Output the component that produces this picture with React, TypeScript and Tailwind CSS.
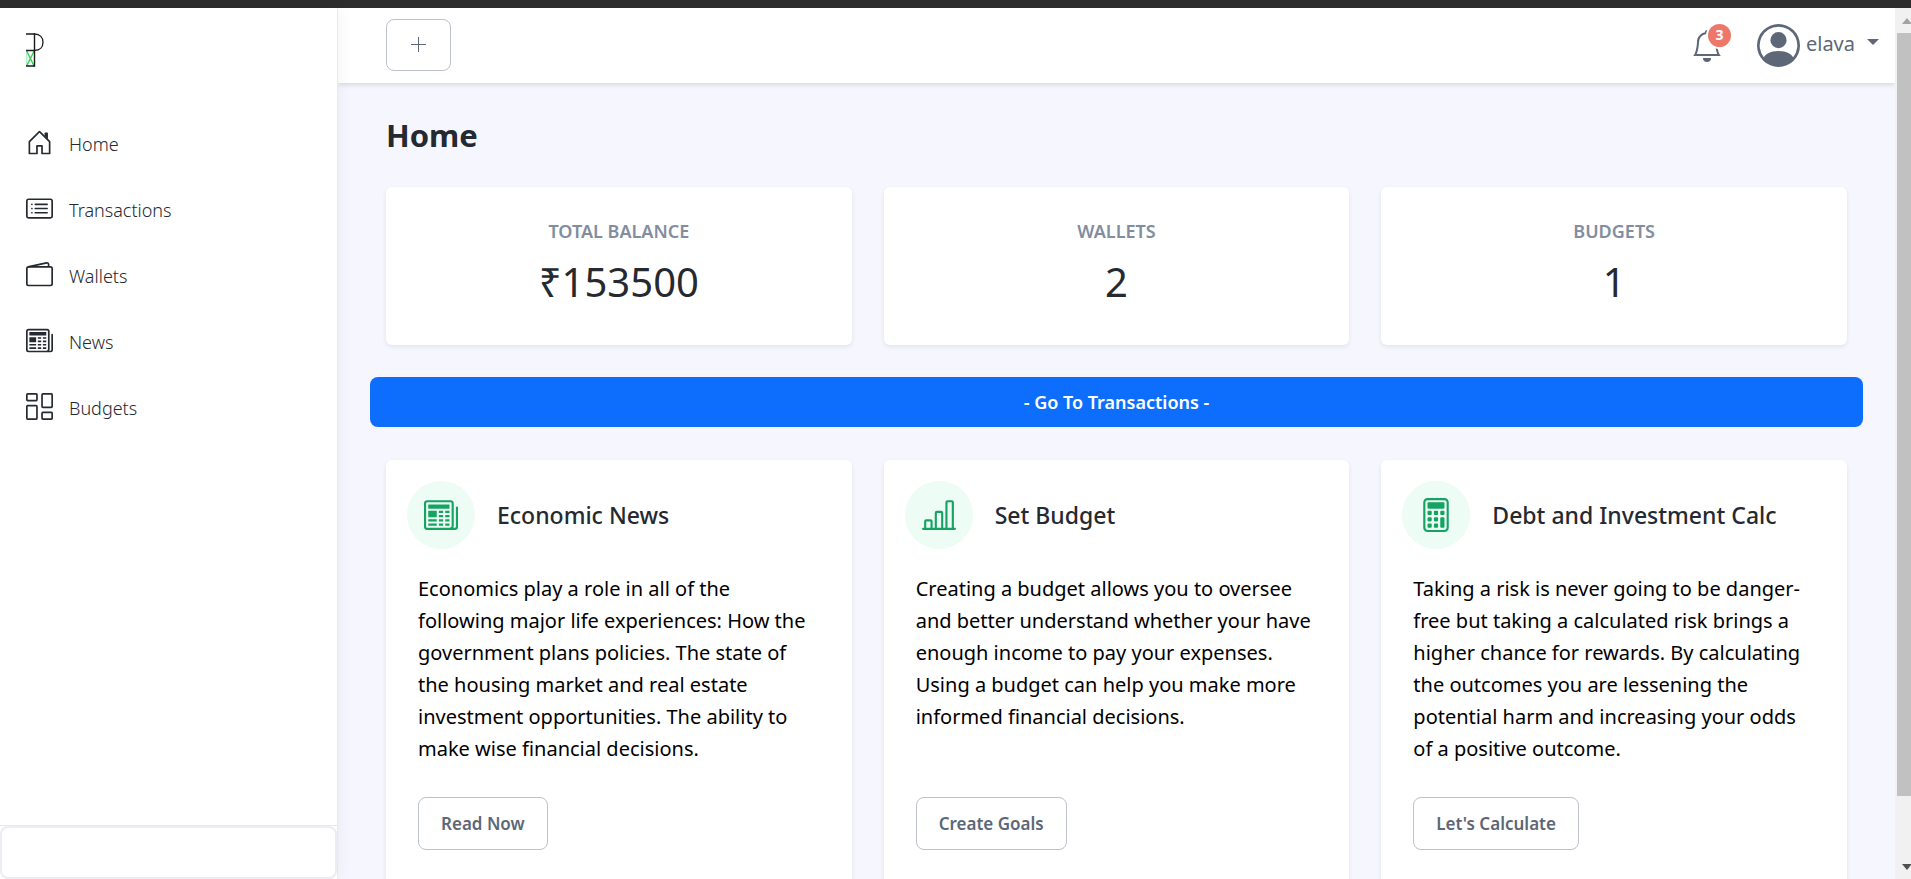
import type { ReactNode } from "react";
import {
  BsBarChartLine,
  BsCalculator,
  BsCardList,
  BsColumnsGap,
  BsNewspaper,
  BsPersonCircle,
} from "react-icons/bs";

function Logo() {
  return (
    <svg width="18" height="34" viewBox="0 0 18 34" fill="none" aria-hidden="true">
      <path d="M0.8 18.3 8 32.8M8 18.3 0.8 32.8" stroke="#2fd158" strokeWidth="1.4" />
      <path d="M0.8 18V33" stroke="#2fd158" strokeWidth="0.5" />
      <path d="M0 1H9M0 17.5H9M0 33H9" stroke="#1b1b1b" strokeWidth="1.4" />
      <path d="M8.5 0.5V33.6" stroke="#1b1b1b" strokeWidth="1.4" />
      <path d="M8.5 1C14 1 17 4.6 17 9.2S14 17.4 8.5 17.4" stroke="#1b1b1b" strokeWidth="1.3" />
    </svg>
  );
}

function HouseIcon() {
  return (
    <svg width="27" height="27" viewBox="0 0 16 16" fill="currentColor" aria-hidden="true">
      <path
        fillRule="evenodd"
        d="M7.646 1.146a.5.5 0 0 1 .708 0l6 6a.5.5 0 0 1 .146.354v7a.5.5 0 0 1-.5.5H9.5a.5.5 0 0 1-.5-.5v-4H7v4a.5.5 0 0 1-.5.5H2a.5.5 0 0 1-.5-.5v-7a.5.5 0 0 1 .146-.354l6-6zM2.5 7.707V14H6v-4a.5.5 0 0 1 .5-.5h3a.5.5 0 0 1 .5.5v4h3.5V7.707L8 2.207l-5.5 5.5z"
      />
      <path fillRule="evenodd" d="M13 2.5V6l-2-2V2.5a.5.5 0 0 1 .5-.5h1a.5.5 0 0 1 .5.5z" />
    </svg>
  );
}

function WalletIcon() {
  return (
    <svg width="27" height="27" viewBox="0 0 16 16" fill="none" stroke="currentColor" strokeLinejoin="round" aria-hidden="true">
      <rect x="0.5" y="3.5" width="15" height="11" rx="1" />
      <path d="M1.2 3.5 12.2 1.1a1 1 0 0 1 1.2 1V3.5" />
    </svg>
  );
}

function BellIcon() {
  return (
    <svg width="32" height="32" viewBox="0 0 16 16" fill="currentColor" aria-hidden="true">
      <path d="M8 16a2 2 0 0 0 2-2H6a2 2 0 0 0 2 2z" />
      <path
        fillRule="evenodd"
        d="M8 1.918l-.797.161A4.002 4.002 0 0 0 4 6c0 .628-.134 2.197-.459 3.742-.16.767-.376 1.566-.663 2.258h10.244c-.287-.692-.502-1.49-.663-2.258C12.134 8.197 12 6.628 12 6a4.002 4.002 0 0 0-3.203-3.92L8 1.917zM14.22 12c.223.447.481.801.78 1H1c.299-.199.557-.553.78-1C2.68 10.2 3 6.88 3 6c0-2.42 1.72-4.44 4.005-4.901a1 1 0 1 1 1.99 0A5.002 5.002 0 0 1 13 6c0 .88.32 4.2 1.22 6z"
      />
    </svg>
  );
}

const navItems: { label: string; icon: ReactNode }[] = [
  { label: "Home", icon: <HouseIcon /> },
  { label: "Transactions", icon: <BsCardList size={27} /> },
  { label: "Wallets", icon: <WalletIcon /> },
  { label: "News", icon: <BsNewspaper size={27} /> },
  { label: "Budgets", icon: <BsColumnsGap size={27} /> },
];

const stats = [
  { label: "TOTAL BALANCE", value: "₹153500" },
  { label: "WALLETS", value: "2" },
  { label: "BUDGETS", value: "1" },
];

const features: { title: string; text: string; action: string; icon: ReactNode }[] = [
  {
    title: "Economic News",
    text: "Economics play a role in all of the following major life experiences: How the government plans policies. The state of the housing market and real estate investment opportunities. The ability to make wise financial decisions.",
    action: "Read Now",
    icon: <BsNewspaper size={34} />,
  },
  {
    title: "Set Budget",
    text: "Creating a budget allows you to oversee and better understand whether your have enough income to pay your expenses. Using a budget can help you make more informed financial decisions.",
    action: "Create Goals",
    icon: <BsBarChartLine size={34} />,
  },
  {
    title: "Debt and Investment Calc",
    text: "Taking a risk is never going to be danger-free but taking a calculated risk brings a higher chance for rewards. By calculating the outcomes you are lessening the potential harm and increasing your odds of a positive outcome.",
    action: "Let's Calculate",
    icon: <BsCalculator size={34} />,
  },
];

function Sidebar() {
  return (
    <aside className="z-20 flex w-[338px] shrink-0 flex-col border-r border-[#e7e9ed] bg-white shadow-[0_0_16px_rgba(0,0,0,0.06)]">
      <a href="#home" aria-label="Portal" className="ml-[26px] mt-[25px]">
        <Logo />
      </a>
      <nav className="mt-[42px] flex flex-1 flex-col">
        {navItems.map((item) => (
          <a
            key={item.label}
            href={"#" + item.label.toLowerCase()}
            className="flex h-[66px] items-center gap-4 pl-[26px] text-lg font-light text-[#252930]"
          >
            {item.icon}
            <span className="pt-1">{item.label}</span>
          </a>
        ))}
      </nav>
      <div className="border-t border-[#e7e9ed]">
        <div className="h-[53px] rounded-lg border-2 border-[#ececf2]" />
      </div>
    </aside>
  );
}

function Header() {
  return (
    <header className="z-10 flex h-[75px] shrink-0 items-center justify-between bg-white pl-12 pr-4 shadow-[0_2px_5px_rgba(0,0,0,0.12)]">
      <button
        type="button"
        aria-label="Add"
        className="mb-0.5 flex h-[52px] w-[65px] items-center justify-center rounded-lg border border-[#bcc1cb] text-[#5d6778]"
      >
        <svg width="15" height="15" viewBox="0 0 15 15" stroke="currentColor" aria-hidden="true">
          <path d="M7.5 0V15M0 7.5H15" />
        </svg>
      </button>
      <div className="flex items-center text-[#5d6778]">
        <button type="button" aria-label="Notifications" className="relative">
          <BellIcon />
          <span className="absolute -right-[8px] -top-1.5 flex h-[23px] w-[23px] items-center justify-center rounded-full bg-[#ed786a] text-sm font-bold text-white ring-2 ring-white">
            3
          </span>
        </button>
        <button type="button" className="ml-[34px] flex items-center">
          <BsPersonCircle size={43} />
          <span className="ml-[6px] mb-1 text-xl">elava</span>
          <svg className="ml-3 mb-2" width="12" height="6" viewBox="0 0 12 6" fill="currentColor" aria-hidden="true">
            <path d="M0 0H12L6 6Z" />
          </svg>
        </button>
      </div>
    </header>
  );
}

function Scrollbar() {
  return (
    <div className="flex w-4 shrink-0 flex-col bg-[#f1f1f1] pl-[2px]" aria-hidden="true">
      <div className="flex h-[25px] items-center justify-end">
        <svg width="9" height="6" viewBox="0 0 9 6" fill="#a3a3a3">
          <path d="M0 6 5 0 9 5V6Z" />
        </svg>
      </div>
      <div className="flex-1 bg-[#c1c1c1]" />
      <div className="flex h-[83px] items-end justify-end pb-[9px]">
        <svg width="9" height="6" viewBox="0 0 9 6" fill="#505050">
          <path d="M0 0 5 6 9 1V0Z" />
        </svg>
      </div>
    </div>
  );
}

export default function App() {
  return (
    <div className="flex h-screen flex-col overflow-hidden bg-[#f5f6fe] font-['Noto_Sans','Open_Sans',sans-serif] text-[#252930]">
      <div className="h-2 shrink-0 bg-[#2d2d2d]" />
      <div className="flex min-h-0 flex-1">
        <Sidebar />
        <div className="flex min-w-0 flex-1 flex-col overflow-hidden">
          <Header />
          <main className="px-8">
            <h1 className="mx-4 mt-8 text-[31px] font-bold leading-[40px]">Home</h1>
            <section className="mx-4 mt-8 grid grid-cols-3 gap-8">
              {stats.map((stat) => (
                <div
                  key={stat.label}
                  className="flex h-[158px] flex-col items-center rounded-md bg-white pt-8 shadow-[0_2px_5px_rgba(0,0,0,0.08)]"
                >
                  <h2 className="text-lg font-semibold leading-6 text-[#828d9f]">{stat.label}</h2>
                  <p className="mt-3 text-[40px] leading-[54px]">{stat.value}</p>
                </div>
              ))}
            </section>
            <a
              href="#transactions"
              className="mt-8 flex h-[50px] items-center justify-center rounded-lg bg-[#0d6efd] text-lg font-semibold text-white"
            >
              - Go To Transactions -
            </a>
            <section className="mx-4 mt-[33px] grid grid-cols-3 gap-8">
              {features.map((feature) => (
                <article
                  key={feature.title}
                  className="flex flex-col rounded-md bg-white pb-10 shadow-[0_2px_5px_rgba(0,0,0,0.08)]"
                >
                  <div className="flex items-center gap-[22px] pl-[21px] pt-[21px]">
                    <span className="flex h-[68px] w-[68px] items-center justify-center rounded-full bg-[#edfcf5] text-[#15a362]">
                      {feature.icon}
                    </span>
                    <h2 className="text-[23px] font-medium">{feature.title}</h2>
                  </div>
                  <p className="mt-6 flex-1 px-8 text-xl leading-[32px] text-black">{feature.text}</p>
                  <div className="mt-8 px-8">
                    <button
                      type="button"
                      className="h-[53px] rounded-lg border border-[#bcc1cb] px-[22px] text-[17px] font-semibold text-[#5d6778]"
                    >
                      {feature.action}
                    </button>
                  </div>
                </article>
              ))}
            </section>
          </main>
        </div>
        <Scrollbar />
      </div>
    </div>
  );
}
